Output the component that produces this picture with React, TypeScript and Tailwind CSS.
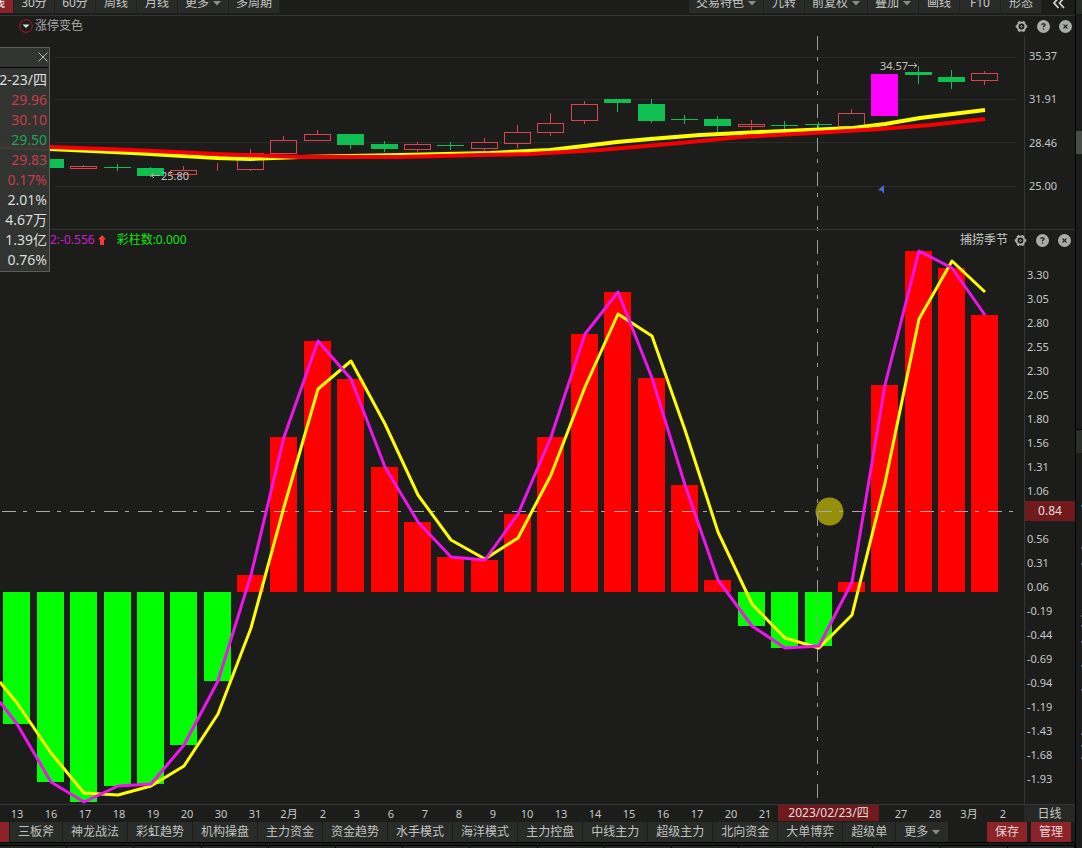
import { FaCircleQuestion, FaCircleXmark } from "react-icons/fa6";

interface Candle {
  kind: "up" | "down" | "limit";
  top: number;
  bottom: number;
  high?: number;
  low?: number;
}

const STEP = 33.38;
const FIRST = 16.4;
const BASE = 592;
const centerOf = (i: number) => Math.round(FIRST + STEP * i);

// index 0 is hidden behind the quote panel
const candles: (Candle | null)[] = [
  null,
  { kind: "down", top: 159, bottom: 168 },
  { kind: "up", top: 166, bottom: 168, high: 165 },
  { kind: "down", top: 167, bottom: 168, high: 164, low: 171 },
  { kind: "down", top: 168, bottom: 176, high: 167, low: 177 },
  { kind: "up", top: 170, bottom: 174, high: 166 },
  { kind: "up", top: 167, bottom: 167, high: 163, low: 171 },
  { kind: "up", top: 153, bottom: 169, high: 149, low: 171 },
  { kind: "up", top: 140, bottom: 153, high: 136 },
  { kind: "up", top: 134, bottom: 140, high: 130 },
  { kind: "down", top: 134, bottom: 145, low: 149 },
  { kind: "down", top: 144, bottom: 149, high: 141, low: 152 },
  { kind: "up", top: 144, bottom: 149, high: 142, low: 152 },
  { kind: "down", top: 145, bottom: 146, high: 142, low: 150 },
  { kind: "up", top: 142, bottom: 148, high: 138, low: 151 },
  { kind: "up", top: 132, bottom: 143, high: 125, low: 148 },
  { kind: "up", top: 123, bottom: 132, high: 113, low: 136 },
  { kind: "up", top: 104, bottom: 120, high: 101, low: 124 },
  { kind: "down", top: 99, bottom: 103, low: 112 },
  { kind: "down", top: 104, bottom: 121, high: 99, low: 123 },
  { kind: "down", top: 119, bottom: 120, high: 115, low: 124 },
  { kind: "down", top: 119, bottom: 126, high: 116, low: 132 },
  { kind: "up", top: 124, bottom: 126, high: 120, low: 130 },
  { kind: "down", top: 125, bottom: 126, high: 121, low: 129 },
  { kind: "down", top: 124, bottom: 125, high: 122, low: 128 },
  { kind: "up", top: 113, bottom: 126, high: 109 },
  { kind: "limit", top: 74, bottom: 116 },
  { kind: "down", top: 72, bottom: 75, high: 66, low: 84 },
  { kind: "down", top: 77, bottom: 82, high: 70, low: 89 },
  { kind: "up", top: 73, bottom: 80, high: 71, low: 85 },
];

const bars = [
  724, 782, 802, 786, 784, 745, 681, 575, 437, 341, 379, 467, 522, 557, 560,
  514, 437, 334, 292, 378, 485, 580, 626, 648, 646, 582, 385, 251, 268, 315,
];

const signal = [
  703, 753, 793, 795, 786, 766, 714, 628, 507, 389, 361, 424, 495, 540, 559,
  538, 475, 387, 314, 336, 430, 532, 604, 638, 648, 615, 483, 319, 261, 292,
];

const toPoints = (values: number[], start: string) =>
  start + " " + values.map((y, i) => `${centerOf(i) + 1},${y}`).join(" ");

const periods = ["30分", "60分", "周线", "月线", "更多", "多周期"];
const tools = ["交易特色", "九转", "前复权", "叠加", "画线", "F10", "形态"];
const withArrow = ["更多", "交易特色", "前复权", "叠加"];

const priceTicks = ["35.37", "31.91", "28.46", "25.00"];
const valueTicks = [
  "3.30", "3.05", "2.80", "2.55", "2.30", "2.05", "1.80", "1.56", "1.31",
  "1.06", "", "0.56", "0.31", "0.06", "-0.19", "-0.44", "-0.69", "-0.94",
  "-1.19", "-1.43", "-1.68", "-1.93",
];

const datesBefore = [
  "13", "16", "17", "18", "19", "20", "30", "31", "2月", "2", "3", "6", "7",
  "8", "9", "10", "13", "14", "15", "16", "17", "20", "21",
];
const datesAfter = ["27", "28", "3月", "2"];

const strategies = [
  "三板斧", "神龙战法", "彩虹趋势", "机构操盘", "主力资金", "资金趋势",
  "水手模式", "海洋模式", "主力控盘", "中线主力", "超级主力", "北向资金",
  "大单博弈", "超级单",
];

const quotes = [
  { text: "2-23/四", color: "text-[#dcdcdc]" },
  { text: "29.96", color: "text-[#c83c4a]" },
  { text: "30.10", color: "text-[#c83c4a]" },
  { text: "29.50", color: "text-[#21a35a]" },
  { text: "29.83", color: "text-[#c83c4a]" },
  { text: "0.17%", color: "text-[#c83c4a]" },
  { text: "2.01%", color: "text-[#dcdcdc]" },
  { text: "4.67万", color: "text-[#dcdcdc]" },
  { text: "1.39亿", color: "text-[#dcdcdc]" },
  { text: "0.76%", color: "text-[#dcdcdc]" },
];

const CaretDown = () => (
  <svg viewBox="0 0 8 5" className="h-[5px] w-2 shrink-0 fill-[#8c8c8c]">
    <path d="M0 0h8L4 4.5z" />
  </svg>
);

const GearIcon = () => (
  <svg viewBox="0 0 14 14" className="h-[13px] w-[13px]" fill="none" stroke="currentColor">
    <circle cx="7" cy="7" r="4.2" strokeWidth="2.200" />
    <circle cx="7" cy="7" r="0.900" strokeWidth="1" />
    {[0, 60, 120, 180, 240, 300].map((a) => (
      <path key={a} d="M11 7h2.2" strokeWidth="2.8" transform={`rotate(${a} 7 7)`} />
    ))}
  </svg>
);

const PanelActions = () => (
  <div className="flex items-center gap-[9px] text-[#a9aba9]">
    <button aria-label="设置">
      <GearIcon />
    </button>
    <button aria-label="帮助">
      <FaCircleQuestion className="h-[13px] w-[13px]" />
    </button>
    <button aria-label="关闭">
      <FaCircleXmark className="h-[13px] w-[13px]" />
    </button>
  </div>
);

const ToolbarButton = ({ label }: { label: string }) => (
  <button className="flex h-5 min-w-[41px] items-center justify-center gap-1 whitespace-nowrap border-r border-[#1f201f] bg-[#292b29] px-[7px]">
    {label}
    {withArrow.includes(label) && <CaretDown />}
  </button>
);

const Toolbar = () => (
  <div className="flex h-4 border-b border-[#343634] text-xs text-[#c4c6c4]">
    <div className="flex h-[13px] flex-1 items-end justify-between overflow-hidden">
      <div className="flex">
        <button className="flex h-5 w-[14px] items-center justify-end overflow-hidden border-r border-[#1f201f] bg-[#8b2329] pr-2 text-white">
          线
        </button>
        {periods.map((p) => (
          <ToolbarButton key={p} label={p} />
        ))}
      </div>
      <div className="flex">
        {tools.map((t) => (
          <ToolbarButton key={t} label={t} />
        ))}
        <button aria-label="收起" className="flex h-5 w-[33px] items-center justify-center">
          <svg viewBox="0 0 12 12" className="h-3 w-3" fill="none" stroke="#d0d0d0" strokeWidth="1.8">
            <path d="M5.5 1L1 6l4.5 5M11 1L6.500 6l4.500 5" />
          </svg>
        </button>
      </div>
    </div>
  </div>
);

const CandleShape = ({ candle, x }: { candle: Candle; x: number }) => {
  const { kind, top, bottom, high = top, low = bottom } = candle;
  if (kind === "up") {
    return (
      <g stroke="#d8434f" fill="none" shapeRendering="crispEdges">
        <path d={`M${x + 0.5} ${high}V${top}M${x + 0.5} ${bottom}V${low}`} />
        <rect x={x - 12.5} y={top + 0.5} width="26" height={bottom - top} />
      </g>
    );
  }
  return (
    <g fill={kind === "down" ? "#10bf52" : "#ff00ff"} shapeRendering="crispEdges">
      <rect x={x - 13} y={top} width="27" height={bottom - top} />
      <rect x={x} y={high} width="1" height={low - high} />
    </g>
  );
};

const Crosshair = () => (
  <path
    d="M817.5 36V798"
    stroke="#9a9c9a"
    strokeDasharray="14 7 4 9"
    shapeRendering="crispEdges"
  />
);

const PriceChart = () => (
  <svg viewBox="0 36 1024 193" className="block h-auto min-w-0 flex-1" role="img" aria-label="K线">
    <path
      d="M55 57.500H1016M55 99.500H1016M55 142.500H1016M55 186.500H1016"
      stroke="#292b29"
      shapeRendering="crispEdges"
    />
    <Crosshair />
    {candles.map((c, i) => c && <CandleShape key={i} candle={c} x={centerOf(i)} />)}
    <g fill="none" strokeWidth="4" strokeLinejoin="round">
      <path
        stroke="#ffff00"
        d="M0 147L50 149L133 153L217 158L250 159L300 157L400 155L490 153L550 150L584 146L617 142L650 139L700 135L760 132L830 129L853 128L885 124L920 118L985 110"
      />
      <path
        stroke="#f40000"
        d="M0 145L50 147L133 150L217 154L300 157L400 157L480 155L530 154L600 150L680 143L740 137L830 132L880 129L930 125L985 119"
      />
    </g>
    <g fill="#c0c2c0" fontSize="11">
      <text x="880" y="70">34.57</text>
      <text x="161" y="180">25.80</text>
    </g>
    <path
      d="M908 65.500H917M914 63L917 65.500L914 68M160 175.500H151M154 173L151 175.500L154 178"
      stroke="#b0b2b0"
      fill="none"
    />
    <path d="M884 185V194L882 191L878 190Z" fill="#4a68d8" />
  </svg>
);

const SeasonChart = () => (
  <svg viewBox="0 230 1024 574" className="block h-auto min-w-0 flex-1" role="img" aria-label="捕捞季节">
    {bars.map((y, i) => (
      <rect
        key={i}
        x={centerOf(i) - 13}
        y={Math.min(y, BASE)}
        width="27"
        height={Math.abs(y - BASE)}
        fill={y > BASE ? "#00ff00" : "#ff0000"}
      />
    ))}
    <circle cx="829.500" cy="511.500" r="14" fill="#968f0c" />
    <Crosshair />
    <path
      d="M2 511.500H1016"
      stroke="#a8aaa8"
      strokeDasharray="14 7 4 9"
      shapeRendering="crispEdges"
    />
    <g fill="none" strokeWidth="3" strokeLinejoin="round">
      <polyline stroke="#ffff00" points={toPoints(signal, "0,682")} />
      <polyline stroke="#ee14ee" points={toPoints(bars, "0,702")} />
    </g>
  </svg>
);

const QuotePanel = () => (
  <aside className="absolute left-0 top-[47px] w-[50px] border-r border-t border-b border-[#5a5d5a] bg-[#333633]/95 text-sm">
    <div className="mr-px flex h-5 items-center justify-end border-b border-black pb-0.5">
      <button aria-label="关闭">
        <svg viewBox="0 0 10 10" className="h-[10px] w-[10px]" stroke="#b4b6b4">
          <path d="M0.500 0.500L9.500 9.500M9.500 0.500L0.500 9.500" />
        </svg>
      </button>
    </div>
    <ul className="pb-px pt-0.5">
      {quotes.map((q) => (
        <li
          key={q.text}
          className={`flex h-5 items-center justify-end whitespace-nowrap pr-0.5 leading-5 ${q.color}`}
        >
          {q.text}
        </li>
      ))}
    </ul>
  </aside>
);

const DateAxis = () => (
  <div className="flex h-[18px] border-t border-[#343634] text-[11px] text-[#c4c6c4]">
    <div className="flex flex-1 pr-1 leading-[18px]">
      {datesBefore.map((d, i) => (
        <span key={i} className="flex-1 text-center">
          {d}
        </span>
      ))}
      <div className="relative h-full flex-[3]">
        <span className="absolute -left-1 top-0 flex h-4 w-[101px] items-center justify-center whitespace-nowrap bg-[#701a1e] text-xs text-[#e4dede]">
          2023/02/23/四
        </span>
      </div>
      {datesAfter.map((d) => (
        <span key={d} className="flex-1 text-center">
          {d}
        </span>
      ))}
    </div>
    <button className="w-[51px] bg-[#262826] text-xs leading-4">日线</button>
  </div>
);

const StrategyBar = () => (
  <div className="flex h-5 items-stretch justify-between text-xs text-[#c0c2c0]">
    <div className="flex">
      <div className="mr-px w-[9px] bg-[#8b2329]" />
      {strategies.map((s) => (
        <button key={s} className="whitespace-nowrap border-r border-[#1a1b1a] bg-[#292b29] px-2">
          {s}
        </button>
      ))}
      <button className="flex items-center gap-1 whitespace-nowrap bg-[#292b29] px-2">
        更多
        <CaretDown />
      </button>
    </div>
    <div className="flex gap-1 pr-1 text-[#e6d4d4]">
      <button className="w-10 bg-[#8b2329]">保存</button>
      <button className="w-10 bg-[#8b2329]">管理</button>
    </div>
  </div>
);

const specks = [52, 94, 110, 162, 172, 188, 212, 236, 280, 292, 304];

const SideStrip = () => (
  <div className="flex w-[7px] shrink-0 flex-col border-l border-black bg-[#1a1b1a]">
    <div className="h-[14px] bg-[#292b29]" />
    <div className="h-[117px]" />
    <div className="h-[23px] bg-[#4a4c4a]" />
    <div className="h-[275px]" />
    <div className="h-6 border-t border-black bg-[#2c2e2c]" />
    <div className="relative flex-1">
      {specks.map((y) => (
        <i key={y} className="absolute right-0 h-0.5 w-px bg-[#3c6c9c]" style={{ top: y }} />
      ))}
    </div>
  </div>
);

export default function App() {
  return (
    <div className="flex min-h-screen bg-[#1c1d1b] font-['Noto_Sans','Noto_Sans_CJK_SC',sans-serif]">
      <main className="relative flex min-w-0 flex-1 flex-col">
        <Toolbar />

        {/* K-line panel */}
        <section className="border-b border-[#343634]">
          <header className="flex h-5 items-center justify-between pl-[19px] pr-[3px]">
            <button className="flex items-center gap-0.5 text-xs text-[#a6a8a6]">
              <svg viewBox="0 0 14 14" className="h-[14px] w-[14px]">
                <circle cx="7" cy="7" r="6.300" fill="none" stroke="#b01c24" />
                <path d="M3.500 5.500h7L7 9z" fill="#e0e0e0" />
              </svg>
              涨停变色
            </button>
            <PanelActions />
          </header>
          <div className="flex">
            <PriceChart />
            <div className="flex w-[51px] flex-col justify-between border-l border-[#343634] pb-9 pl-1 pt-[13px] text-[11px] text-[#c4c6c4]">
              {priceTicks.map((t) => (
                <span key={t} className="h-[14px] leading-[14px]">
                  {t}
                </span>
              ))}
            </div>
          </div>
        </section>

        {/* indicator panel */}
        <section className="relative flex">
          <SeasonChart />
          <div className="relative flex w-[51px] flex-col border-l border-[#343634] pl-0.5 pt-[33px] text-[11px] text-[#c4c6c4]">
            {valueTicks.map((t, i) => (
              <span key={i} className="h-6 leading-6">
                {t}
              </span>
            ))}
            <span className="absolute inset-x-0 top-[271px] h-5 bg-[#701a1e] text-center text-xs leading-5 text-[#e4dede]">
              0.84
            </span>
          </div>
          <header className="absolute inset-x-0 top-0 flex h-5 items-center justify-between pl-[50px] pr-1 text-xs">
            <div className="flex items-center">
              <span className="text-[#c81ec8]">2:-0.556</span>
              <svg viewBox="0 0 8 10" className="ml-[3px] mr-[11px] h-[10px] w-2 fill-[#f03c3c]">
                <path d="M4 0L8 4.500H6V10H2V4.500H0z" />
              </svg>
              <span className="text-[#0fe60f]">彩柱数:0.000</span>
            </div>
            <div className="flex items-center gap-[6px] text-[#c4c6c4]">
              捕捞季节
              <PanelActions />
            </div>
          </header>
        </section>

        <DateAxis />
        <StrategyBar />
        <div className="flex flex-1 items-end overflow-hidden border-t border-black pt-0.5">
          {Array.from({ length: 16 }, (_, i) => (
            <div key={i} className="h-full flex-1 border-r border-t border-black bg-[#262826]" />
          ))}
        </div>
        <QuotePanel />
      </main>
      <SideStrip />
    </div>
  );
}
